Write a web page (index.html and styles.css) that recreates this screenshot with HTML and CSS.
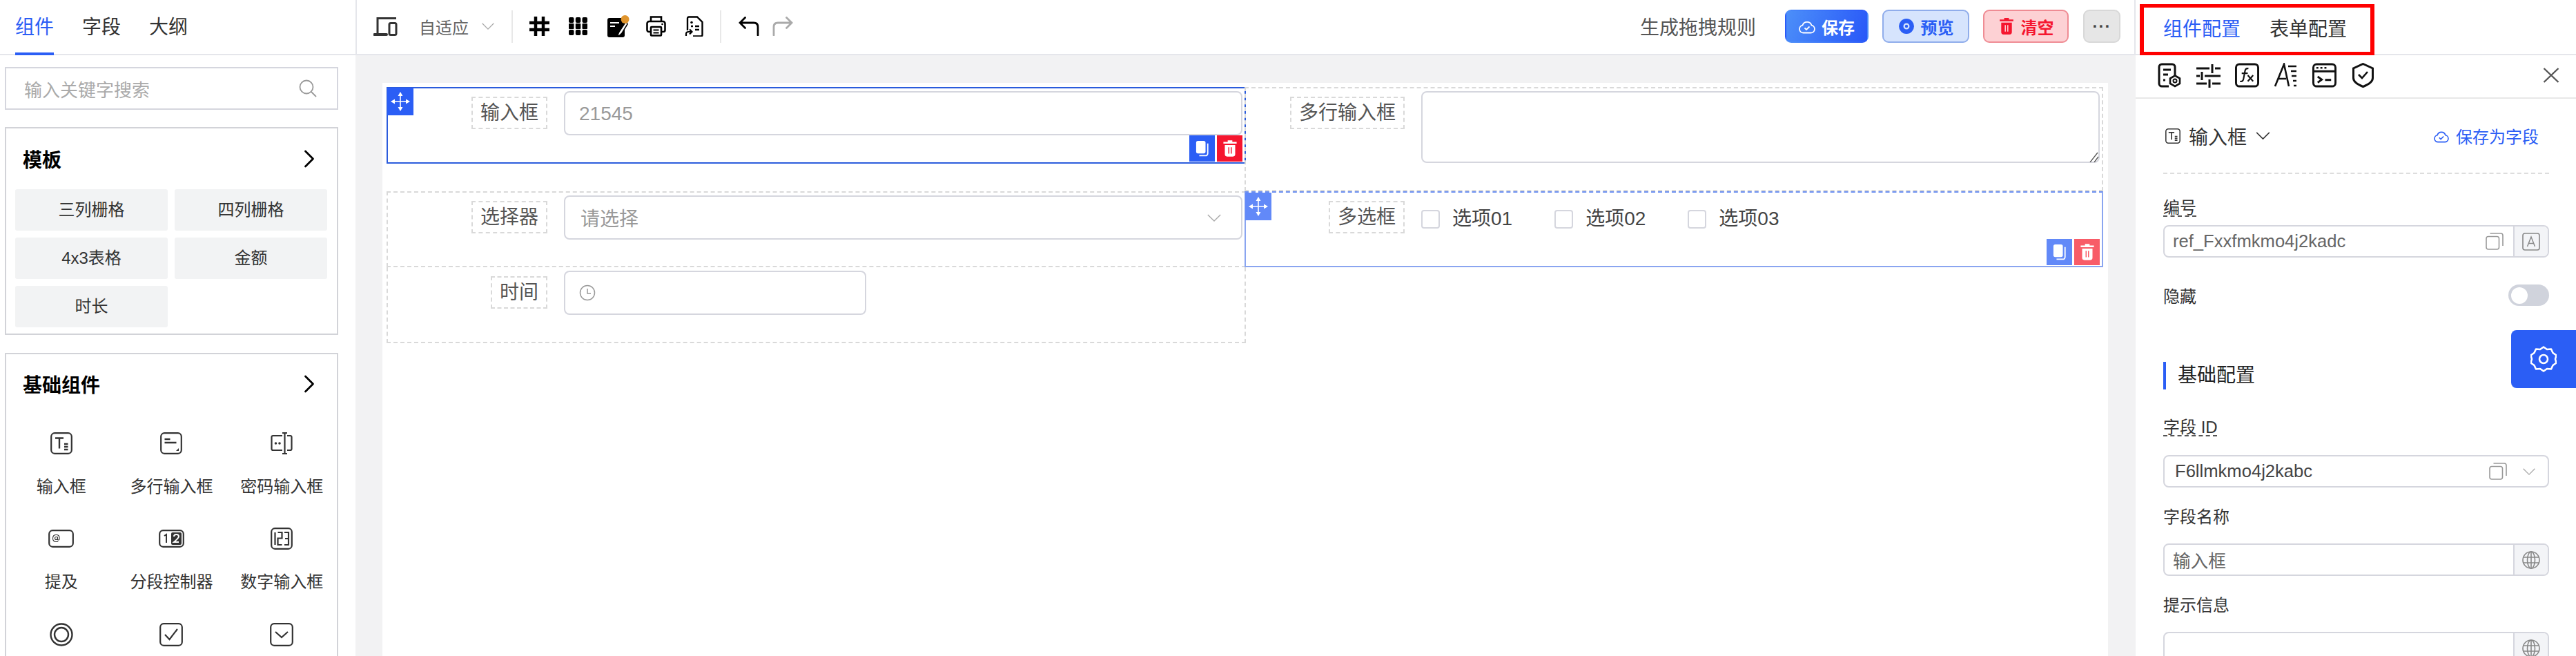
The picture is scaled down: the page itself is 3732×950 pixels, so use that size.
FILE: index.html
```html
<!DOCTYPE html>
<html lang="zh-CN">
<head>
    <meta charset="UTF-8">
    <title>表单设计器</title>
    <link rel="stylesheet" href="styles.css">
</head>
<body>
    <!-- 图标 -->
    <svg class="sprite" xmlns="http://www.w3.org/2000/svg">
        <symbol id="i-search" viewBox="0 0 26 26"><circle cx="11" cy="11" r="9.5" fill="none" stroke="currentColor" stroke-width="1.8"/><path d="M18 18l7 7" stroke="currentColor" stroke-width="1.8" fill="none"/></symbol>
        <symbol id="i-right" viewBox="0 0 16 26"><path d="M2.5 2l11 11-11 11" fill="none" stroke="currentColor" stroke-width="2.8" stroke-linecap="round" stroke-linejoin="round"/></symbol>
        <symbol id="i-down" viewBox="0 0 24 14"><path d="M2 2l10 10L22 2" fill="none" stroke="currentColor" stroke-width="1.6"/></symbol>
        <symbol id="i-input" viewBox="0 0 32 32"><rect x="1.2" y="1.2" width="29.6" height="29.6" rx="5" fill="none" stroke="currentColor" stroke-width="2.2"/><path d="M7 8.5h12M13 8.5v15M20 17h5.5M20 21h5.5M20 25h5.5" fill="none" stroke="currentColor" stroke-width="2.4"/></symbol>
        <symbol id="i-textarea" viewBox="0 0 32 32"><rect x="1.2" y="1.2" width="29.6" height="29.6" rx="5" fill="none" stroke="currentColor" stroke-width="2.2"/><path d="M6.500 10h8M6.500 15h17" fill="none" stroke="currentColor" stroke-width="2.4"/><path d="M27 23v4h-4z" fill="currentColor"/></symbol>
        <symbol id="i-password" viewBox="0 0 32 32"><path d="M17 5H3.500a2 2 0 00-2 2v17a2 2 0 002 2H17M24 5h4.500a2 2 0 012 2v17a2 2 0 01-2 2H24M20.500 1v30M17 1h7M17 31h7" fill="none" stroke="currentColor" stroke-width="2.2"/><circle cx="7.500" cy="16" r="1.800" fill="currentColor"/><circle cx="13" cy="16" r="1.800" fill="currentColor"/></symbol>
        <symbol id="i-mention" viewBox="0 0 37 26"><rect x="1.200" y="1.200" width="34.600" height="23.600" rx="5" fill="none" stroke="currentColor" stroke-width="2.200"/><circle cx="11.500" cy="12.500" r="2" fill="none" stroke="currentColor" stroke-width="1.100"/><path d="M13.500 10.500v3q0 1.800 1.400 1.500 1.300-.4 1.300-2.500 0-5-4.700-5-5 0-5 5t5 5q1.700 0 2.800-.6" fill="none" stroke="currentColor" stroke-width="1.100"/></symbol>
        <symbol id="i-segment" viewBox="0 0 37 26"><rect x="1.200" y="1.200" width="34.600" height="23.600" rx="5" fill="none" stroke="currentColor" stroke-width="2.200"/><path d="M8 9l3-2v12" fill="none" stroke="currentColor" stroke-width="2"/><rect x="18" y="4" width="15" height="18" rx="2" fill="currentColor"/><path d="M22 10q0-3 3.500-3t3.500 3q0 2-7 8h7" fill="none" stroke="#fff" stroke-width="2"/></symbol>
        <symbol id="i-number" viewBox="0 0 32 32"><rect x="1.200" y="1.200" width="29.600" height="29.600" rx="5" fill="none" stroke="currentColor" stroke-width="2.200"/><path d="M6.500 7v18M10.500 7h6v8.500h-6V25h6M20 7h6v9h-5M26 16v9h-6" fill="none" stroke="currentColor" stroke-width="2.200"/></symbol>
        <symbol id="i-radio" viewBox="0 0 34 34"><circle cx="17" cy="17" r="15.500" fill="none" stroke="currentColor" stroke-width="2.400"/><circle cx="17" cy="17" r="10" fill="none" stroke="currentColor" stroke-width="2.400"/></symbol>
        <symbol id="i-checkbox" viewBox="0 0 34 34"><rect x="1.200" y="1.200" width="31.600" height="31.600" rx="5" fill="none" stroke="currentColor" stroke-width="2.200"/><path d="M8 17l6.500 7L26 9" fill="none" stroke="currentColor" stroke-width="2.200"/></symbol>
        <symbol id="i-selectbox" viewBox="0 0 34 34"><rect x="1.200" y="1.200" width="31.600" height="31.600" rx="5" fill="none" stroke="currentColor" stroke-width="2.200"/><path d="M8 13l9 8 9-8" fill="none" stroke="currentColor" stroke-width="2.200"/></symbol>
        <symbol id="i-device" viewBox="0 0 35 28"><path d="M6 26V2.500h27" fill="none" stroke="currentColor" stroke-width="3"/><path d="M1.500 26H19" fill="none" stroke="currentColor" stroke-width="4" stroke-linecap="round"/><rect x="23" y="9.500" width="10" height="17" rx="2" fill="none" stroke="currentColor" stroke-width="3"/></symbol>
        <symbol id="i-hash" viewBox="0 0 29 28"><path d="M9 0v28M20 0v28M0 9h29M0 19h29" fill="none" stroke="currentColor" stroke-width="4.500"/></symbol>
        <symbol id="i-grid" viewBox="0 0 27 26"><rect x="0" y="0" width="7.500" height="8" rx="2" fill="currentColor"/><rect x="9.800" y="0" width="7.500" height="8" rx="2" fill="currentColor"/><rect x="19.500" y="0" width="7.500" height="8" rx="2" fill="currentColor"/><rect x="0" y="9" width="7.500" height="8" rx="1" fill="currentColor"/><rect x="9.800" y="9" width="7.500" height="8" rx="1" fill="currentColor"/><rect x="19.500" y="9" width="7.500" height="8" rx="1" fill="currentColor"/><rect x="0" y="18" width="7.500" height="8" rx="2" fill="currentColor"/><rect x="9.800" y="18" width="7.500" height="8" rx="2" fill="currentColor"/><rect x="19.500" y="18" width="7.500" height="8" rx="2" fill="currentColor"/></symbol>
        <symbol id="i-note" viewBox="0 0 32 32"><rect x="0" y="4" width="25" height="28" rx="3" fill="currentColor"/><path d="M4 11h13M4 16h7" stroke="#fff" stroke-width="2" fill="none"/><path d="M27 9L17 24l-3 7q5-2 7-5l8-13z" fill="#fff" stroke="currentColor" stroke-width="1.500"/><circle cx="25.500" cy="6" r="6" fill="#e0952d"/></symbol>
        <symbol id="i-print" viewBox="0 0 29 30"><path d="M7 8V1.500h15V8M7 23H4a2.500 2.500 0 01-2.500-2.500V11A3 3 0 014.500 8h20a3 3 0 013 3v9.500A2.500 2.500 0 0125 23h-3" fill="none" stroke="currentColor" stroke-width="2.600"/><rect x="7" y="16" width="15" height="12.500" rx="1" fill="none" stroke="currentColor" stroke-width="2.600"/><path d="M10.500 20.500h8M10.500 24.500h8" stroke="currentColor" stroke-width="1.800"/><circle cx="23.500" cy="12" r="1.300" fill="currentColor"/></symbol>
        <symbol id="i-doc" viewBox="0 0 27 30"><path d="M4 21V3.500a2 2 0 012-2h12l7.500 7.500v18.500a2 2 0 01-2 2H12" fill="none" stroke="currentColor" stroke-width="2.400"/><circle cx="10" cy="9.500" r="1.800" fill="currentColor"/><path d="M9 15h3M15 15h6M15 20h6" stroke="currentColor" stroke-width="2.400"/><path d="M2 29v-3q0-3 4-3h4M7 19.500l3.500 3.500L7 26.500" fill="none" stroke="currentColor" stroke-width="2.200"/></symbol>
        <symbol id="i-undo" viewBox="0 0 31 28"><path d="M29 27V15q0-6-6-6H3M10.500 1.500L3 9l7.500 7.500" fill="none" stroke="currentColor" stroke-width="2.800" stroke-linecap="round"/></symbol>
        <symbol id="i-redo" viewBox="0 0 31 28"><path d="M2 27V15q0-6 6-6h20M20.500 1.500L28 9l-7.500 7.500" fill="none" stroke="currentColor" stroke-width="2.800" stroke-linecap="round"/></symbol>
        <symbol id="i-cloud" viewBox="0 0 24 22"><path d="M6.500 20.500a5.500 5.500 0 01-1-10.900 6.800 6.800 0 0113 0 5.500 5.500 0 01-1 10.900z" fill="none" stroke="currentColor" stroke-width="1.800"/><path d="M8.500 13.500l2.500 2.500 4.500-4.500" fill="none" stroke="currentColor" stroke-width="1.800"/></symbol>
        <symbol id="i-eye" viewBox="0 0 24 24"><path fill-rule="evenodd" d="M12 1q5 0 8 3.500t3 7.500-3 7.500-8 3.500-8-3.500T1 12t3-7.500T12 1zm0 6.500a4.500 4.500 0 100 9 4.500 4.500 0 000-9z" fill="currentColor"/><circle cx="12" cy="12" r="2.200" fill="currentColor"/></symbol>
        <symbol id="i-trash" viewBox="0 0 24 28"><path fill-rule="evenodd" d="M8 0h8v2.500h7.500v3H.5v-3H8zM3 8h18v16a4 4 0 01-4 4H7a4 4 0 01-4-4zm6 4v11h1.800V12zm4.200 0v11H15V12z" fill="currentColor"/></symbol>
        <symbol id="i-move" viewBox="0 0 28 28"><path d="M14 1.500v25M1.500 14h25" stroke="currentColor" stroke-width="1.600" fill="none"/><path d="M14 0l3.500 6h-7zM14 28l3.500-6h-7zM0 14l6-3.500v7zM28 14l-6-3.500v7z" fill="currentColor"/></symbol>
        <symbol id="i-dup" viewBox="0 0 22 26"><rect x="1" y="1" width="15" height="20" rx="3" fill="currentColor"/><path d="M19.500 5v16a3.500 3.500 0 01-3.500 3.500H6" fill="none" stroke="currentColor" stroke-width="2"/></symbol>
        <symbol id="i-clock" viewBox="0 0 24 24"><circle cx="12" cy="12" r="10.500" fill="none" stroke="currentColor" stroke-width="1.500"/><path d="M12 6v7h5" fill="none" stroke="currentColor" stroke-width="1.500"/></symbol>
        <symbol id="i-grip" viewBox="0 0 14 15"><path d="M1 15L12 1M7 15l6-8" fill="none" stroke="currentColor" stroke-width="1.300"/></symbol>
        <symbol id="i-form-gear" viewBox="0 0 35 36"><path d="M16 34H6a4 4 0 01-4-4V6a4 4 0 014-4h15a4 4 0 014 4v12" fill="none" stroke="currentColor" stroke-width="3"/><path d="M8 10h11M8 17h7M8 25h3" stroke="currentColor" stroke-width="3"/><path d="M25 18.500l7 4v7.500l-7 4-7-4v-7.500z" fill="#fff" stroke="currentColor" stroke-width="2.600"/><circle cx="25" cy="26" r="2.500" fill="none" stroke="currentColor" stroke-width="2"/></symbol>
        <symbol id="i-sliders" viewBox="0 0 35 36"><path d="M0 8h19M27 8h8M0 19h5M12 19h23M0 30h15M23 30h12M23 2v13M8 13v12M19 24v12" fill="none" stroke="currentColor" stroke-width="3"/></symbol>
        <symbol id="i-fx" viewBox="0 0 36 36"><rect x="1.500" y="1.500" width="33" height="33" rx="5" fill="none" stroke="currentColor" stroke-width="3"/><path d="M20 8q-4-1-5 3l-2.500 13q-1 4-5 3M10 15h9M19 18l8 9M27 18l-8 9" fill="none" stroke="currentColor" stroke-width="2.200"/></symbol>
        <symbol id="i-font" viewBox="0 0 33 36"><path d="M1 34L14 2l7 32M6 23h11M20 5h12M24 12h8M25 19h7M27 26h5M28 33h4" fill="none" stroke="currentColor" stroke-width="2.600"/></symbol>
        <symbol id="i-console" viewBox="0 0 36 36"><rect x="1.500" y="1.500" width="33" height="33" rx="5" fill="none" stroke="currentColor" stroke-width="3"/><path d="M2 12h32M8 20l6 4.500L8 29M19 25h9" fill="none" stroke="currentColor" stroke-width="3"/><path d="M6 7h3M12 7h3M18 7h3" stroke="currentColor" stroke-width="2.600"/></symbol>
        <symbol id="i-shield" viewBox="0 0 31 36"><path d="M15.500 1.500L29.500 8v14q0 7-14 12.500Q1.500 29 1.500 22V8z" fill="none" stroke="currentColor" stroke-width="3"/><path d="M9 17l5 5 8-9" fill="none" stroke="currentColor" stroke-width="2.600"/></symbol>
        <symbol id="i-close" viewBox="0 0 24 22"><path d="M1.500 1l21 20M22.500 1l-21 20" fill="none" stroke="currentColor" stroke-width="2.400"/></symbol>
        <symbol id="i-copy" viewBox="0 0 26 25"><rect x="1" y="5.500" width="18.500" height="18.500" rx="3" fill="none" stroke="currentColor" stroke-width="1.600"/><path d="M6.500 1H22a3 3 0 013 3v15" fill="none" stroke="currentColor" stroke-width="1.600"/></symbol>
        <symbol id="i-letter" viewBox="0 0 26 26"><rect x="1" y="1" width="24" height="24" rx="3" fill="none" stroke="currentColor" stroke-width="1.600"/><path d="M7.500 20L13 6l5.500 14M9.500 15.500h7" fill="none" stroke="currentColor" stroke-width="1.500"/></symbol>
        <symbol id="i-globe" viewBox="0 0 26 26"><circle cx="13" cy="13" r="12" fill="none" stroke="currentColor" stroke-width="1.600"/><ellipse cx="13" cy="13" rx="5.500" ry="12" fill="none" stroke="currentColor" stroke-width="1.600"/><path d="M2 9h22M2 17h22M13 1v24" fill="none" stroke="currentColor" stroke-width="1.600"/></symbol>
        <symbol id="i-gear" viewBox="0 0 38 38"><path d="M19 1.500l5 3.500 6-.5 2.500 5.500 5 3.500-1.500 5.500 1.500 5.500-5 3.500L30 33.500l-6-.5-5 3.500-5-3.500-6 .5-2.500-5.500-5-3.500L2 19 .500 13.500l5-3.500L8 4.500l6 .5z" fill="none" stroke="currentColor" stroke-width="2.600" stroke-linejoin="round"/><circle cx="19" cy="19" r="6" fill="none" stroke="currentColor" stroke-width="2.600"/></symbol>
    </svg>

    <div class="app">
        <!-- 左侧组件栏 -->
        <aside class="sidebar">
            <div class="tabs">
                <span class="tab active">组件</span>
                <span class="tab">字段</span>
                <span class="tab">大纲</span>
            </div>
            <div class="side-body">
                <div class="search">
                    <span>输入关键字搜索</span>
                    <svg class="search-icon"><use href="#i-search"/></svg>
                </div>

                <div class="card">
                    <div class="card-head">
                        <span>模板</span>
                        <svg class="card-arrow"><use href="#i-right"/></svg>
                    </div>
                    <div class="tpl-grid">
                        <div class="tpl">三列栅格</div>
                        <div class="tpl">四列栅格</div>
                        <div class="tpl">4x3表格</div>
                        <div class="tpl">金额</div>
                        <div class="tpl">时长</div>
                    </div>
                </div>

                <div class="card card-fill">
                    <div class="card-head">
                        <span>基础组件</span>
                        <svg class="card-arrow"><use href="#i-right"/></svg>
                    </div>
                    <div class="comp-grid">
                        <div class="comp"><svg class="comp-icon"><use href="#i-input"/></svg><span>输入框</span></div>
                        <div class="comp"><svg class="comp-icon"><use href="#i-textarea"/></svg><span>多行输入框</span></div>
                        <div class="comp"><svg class="comp-icon"><use href="#i-password"/></svg><span>密码输入框</span></div>
                        <div class="comp"><svg class="comp-icon wide"><use href="#i-mention"/></svg><span>提及</span></div>
                        <div class="comp"><svg class="comp-icon wide"><use href="#i-segment"/></svg><span>分段控制器</span></div>
                        <div class="comp"><svg class="comp-icon"><use href="#i-number"/></svg><span>数字输入框</span></div>
                        <div class="comp"><svg class="comp-icon tall"><use href="#i-radio"/></svg></div>
                        <div class="comp"><svg class="comp-icon tall"><use href="#i-checkbox"/></svg></div>
                        <div class="comp"><svg class="comp-icon tall"><use href="#i-selectbox"/></svg></div>
                    </div>
                </div>
            </div>
        </aside>

        <!-- 中间画布 -->
        <main class="center">
            <div class="toolbar">
                <svg class="tb-device"><use href="#i-device"/></svg>
                <span class="tb-mode">自适应</span>
                <svg class="tb-chevron"><use href="#i-down"/></svg>
                <span class="tb-line"></span>
                <svg class="tb-icon hash"><use href="#i-hash"/></svg>
                <svg class="tb-icon grid"><use href="#i-grid"/></svg>
                <svg class="tb-icon note"><use href="#i-note"/></svg>
                <svg class="tb-icon print"><use href="#i-print"/></svg>
                <svg class="tb-icon doc"><use href="#i-doc"/></svg>
                <span class="tb-line"></span>
                <svg class="tb-icon undo"><use href="#i-undo"/></svg>
                <svg class="tb-icon redo"><use href="#i-redo"/></svg>

                <span class="tb-rule">生成拖拽规则</span>
                <button class="btn btn-save"><svg class="btn-icon"><use href="#i-cloud"/></svg>保存</button>
                <button class="btn btn-preview"><svg class="btn-icon"><use href="#i-eye"/></svg>预览</button>
                <button class="btn btn-clear"><svg class="btn-icon"><use href="#i-trash"/></svg>清空</button>
                <button class="btn btn-more">···</button>
            </div>

            <div class="canvas">
                <div class="board">
                    <div class="col">
                        <div class="item short selected">
                            <div class="handle"><svg><use href="#i-move"/></svg></div>
                            <div class="label-wrap"><span class="label">输入框</span></div>
                            <div class="control"><span class="ph num">21545</span></div>
                            <div class="actions">
                                <span class="act act-copy"><svg><use href="#i-dup"/></svg></span>
                                <span class="act act-del"><svg><use href="#i-trash"/></svg></span>
                            </div>
                        </div>
                        <div class="item">
                            <div class="label-wrap"><span class="label">选择器</span></div>
                            <div class="control select"><span class="ph">请选择</span><svg class="select-arrow"><use href="#i-down"/></svg></div>
                        </div>
                        <div class="item no-top">
                            <div class="label-wrap"><span class="label">时间</span></div>
                            <div class="control time"><svg class="clock"><use href="#i-clock"/></svg></div>
                        </div>
                    </div>

                    <div class="col col-right">
                        <div class="item tall-item">
                            <div class="label-wrap"><span class="label">多行输入框</span></div>
                            <div class="area-wrap">
                                <textarea class="area"></textarea>
                                <svg class="grip"><use href="#i-grip"/></svg>
                            </div>
                        </div>
                        <div class="item hovered">
                            <div class="handle"><svg><use href="#i-move"/></svg></div>
                            <div class="label-wrap"><span class="label">多选框</span></div>
                            <div class="checks">
                                <span class="check"><i></i>选项01</span>
                                <span class="check"><i></i>选项02</span>
                                <span class="check"><i></i>选项03</span>
                            </div>
                            <div class="actions">
                                <span class="act act-copy"><svg><use href="#i-dup"/></svg></span>
                                <span class="act act-del"><svg><use href="#i-trash"/></svg></span>
                            </div>
                        </div>
                    </div>
                </div>
            </div>
        </main>

        <!-- 右侧配置 -->
        <aside class="panel">
            <div class="panel-top">
                <div class="panel-tabs">
                    <span class="active">组件配置</span>
                    <span>表单配置</span>
                </div>
            </div>
            <div class="panel-tools">
                <svg class="pt i1"><use href="#i-form-gear"/></svg>
                <svg class="pt i2"><use href="#i-sliders"/></svg>
                <svg class="pt i3"><use href="#i-fx"/></svg>
                <svg class="pt i4"><use href="#i-font"/></svg>
                <svg class="pt i5"><use href="#i-console"/></svg>
                <svg class="pt i6"><use href="#i-shield"/></svg>
                <svg class="pt-close"><use href="#i-close"/></svg>
            </div>
            <div class="panel-body">
                <div class="comp-head">
                    <svg class="comp-head-icon"><use href="#i-input"/></svg>
                    <span class="comp-head-name">输入框</span>
                    <svg class="comp-head-arrow"><use href="#i-down"/></svg>
                    <span class="save-field"><svg><use href="#i-cloud"/></svg>保存为字段</span>
                </div>

                <div class="f-label first"><span class="dashed">编号</span></div>
                <div class="field">
                    <span class="field-text ref">ref_Fxxfmkmo4j2kadc</span>
                    <svg class="copy"><use href="#i-copy"/></svg>
                    <span class="addon"><svg><use href="#i-letter"/></svg></span>
                </div>

                <div class="switch-row">
                    <span>隐藏</span>
                    <span class="switch"><i></i></span>
                </div>

                <div class="section">基础配置</div>

                <div class="f-label id-label"><span class="dashed">字段 ID</span></div>
                <div class="field">
                    <span class="field-text dark">F6llmkmo4j2kabc</span>
                    <svg class="copy"><use href="#i-copy"/></svg>
                    <svg class="field-arrow"><use href="#i-down"/></svg>
                </div>

                <div class="f-label">字段名称</div>
                <div class="field">
                    <span class="field-text">输入框</span>
                    <span class="addon"><svg><use href="#i-globe"/></svg></span>
                </div>

                <div class="f-label">提示信息</div>
                <div class="field">
                    <span class="field-text"></span>
                    <span class="addon"><svg><use href="#i-globe"/></svg></span>
                </div>
            </div>
            <div class="gear-tab"><svg><use href="#i-gear"/></svg></div>
        </aside>
    </div>
</body>
</html>
```

FILE: styles.css
```css
* {
    box-sizing: border-box;
    margin: 0;
    padding: 0;
}

body {
    background: #fff;
    color: #333;
    font-family: "Liberation Sans", "Noto Sans CJK SC", sans-serif;
    overflow: hidden;
}

svg {
    display: block;
    flex: none;
}

.sprite {
    display: none;
}

.app {
    display: flex;
    width: 3732px;
    height: 950px;
    overflow: hidden;
}

/* 左侧 */
.sidebar {
    flex: none;
    width: 515px;
    height: 950px;
    overflow: hidden;
}

.tabs {
    display: flex;
    gap: 41px;
    height: 80px;
    padding-left: 22px;
    border-bottom: 2px solid #e5e6eb;
}

.tab {
    position: relative;
    height: 80px;
    font-size: 28px;
    line-height: 80px;
}

.tab.active {
    color: #2b5ef5;
}

.tab.active::after {
    content: "";
    position: absolute;
    left: 0;
    right: 0;
    bottom: 0;
    height: 4px;
    background: #2b5ef5;
}

.side-body {
    padding: 17px 25px 0 7px;
}

.search {
    display: flex;
    align-items: center;
    justify-content: space-between;
    height: 62px;
    padding: 0 29px 0 26px;
    border: 2px solid #d5d6de;
    color: #aaa;
    font-size: 26px;
}

.search-icon {
    width: 26px;
    height: 26px;
    color: #999;
}

.card {
    margin-top: 25px;
    padding-bottom: 9px;
    border: 2px solid #d2d3d8;
}

.card-fill {
    margin-top: 26px;
    height: 600px;
}

.card-head {
    display: flex;
    align-items: center;
    justify-content: space-between;
    height: 88px;
    padding: 0 32px 0 24px;
    color: #000;
    font-size: 28px;
    font-weight: 700;
}

.card-fill .card-head {
    height: 86px;
    margin-bottom: 2px;
}

.card-arrow {
    width: 16px;
    height: 26px;
}

.tpl-grid {
    display: grid;
    grid-template-columns: 221px 221px;
    gap: 10px;
    padding-left: 13px;
}

.tpl {
    height: 60px;
    background: #f2f3f4;
    border-radius: 3px;
    font-size: 24px;
    line-height: 60px;
    text-align: center;
}

.comp-grid {
    display: grid;
    grid-template-columns: repeat(3, 1fr);
}

.comp {
    display: flex;
    flex-direction: column;
    align-items: center;
    height: 138px;
    padding-top: 25px;
    font-size: 24px;
    line-height: 34px;
}

.comp-icon {
    width: 32px;
    height: 32px;
    margin-bottom: 30px;
}

.comp-icon.wide {
    width: 37px;
    height: 26px;
    margin: 3px 0 33px;
}

.comp-icon.tall {
    width: 34px;
    height: 34px;
}

/* 中间 */
.center {
    flex: none;
    width: 2579px;
    height: 950px;
    background: #f2f2f3;
}

.toolbar {
    display: flex;
    align-items: center;
    height: 80px;
    padding: 0 20px 2px 24px;
    background: #fff;
    border-left: 2px solid #e5e6eb;
    border-right: 2px solid #e5e6eb;
    border-bottom: 2px solid #e5e6eb;
}

.tb-device {
    width: 35px;
    height: 28px;
}

.tb-mode {
    margin-left: 31px;
    color: #666;
    font-size: 24px;
}

.tb-chevron {
    width: 20px;
    height: 12px;
    margin-left: 18px;
    color: #aaa;
}

.tb-line {
    width: 2px;
    height: 47px;
    margin: 0 24px;
    background: #e8e8e8;
}

.tb-icon {
    color: #000;
}

.hash { width: 29px; height: 28px; }
.grid { width: 27px; height: 26px; margin-left: 28px; }
.note { width: 32px; height: 32px; margin-left: 29px; }
.print { width: 29px; height: 30px; margin-left: 24px; }
.doc { width: 27px; height: 30px; margin-left: 27px; }
.undo { width: 31px; height: 28px; }
.redo { width: 31px; height: 28px; margin-left: 19px; color: #aaa; }

.tb-rule {
    margin-left: auto;
    margin-right: 42px;
    color: #555;
    font-size: 28px;
}

.btn {
    display: flex;
    align-items: center;
    justify-content: center;
    gap: 9px;
    height: 48px;
    margin-right: 20px;
    border: 2px solid transparent;
    border-radius: 9px;
    font-family: inherit;
    font-size: 24px;
    font-weight: 700;
}

.btn-icon {
    width: 24px;
    height: 24px;
}

.btn-save {
    width: 121px;
    color: #fff;
    background: linear-gradient(110deg, #4c8ff9, #2857f8);
}

.btn-preview {
    width: 126px;
    color: #2b5ef5;
    background: #d6e4fd;
    border-color: #90adeb;
}

.btn-clear {
    width: 124px;
    color: #f5162f;
    background: #fdd1d4;
    border-color: #ef8c94;
}

.btn-more {
    width: 54px;
    margin-right: 0;
    margin-left: 1px;
    color: #444;
    background: #e6e6e6;
    border-color: #d8d8d8;
    letter-spacing: 1px;
}

.canvas {
    padding: 40px 0 0 39px;
}

.board {
    display: flex;
    width: 2500px;
    height: 830px;
    padding: 6px 0 0 6px;
    background: #fff;
}

.col {
    flex: none;
    width: 1245px;
}

.col-right {
    width: 1244px;
    margin-left: -2px;
}

.item {
    position: relative;
    display: flex;
    align-items: flex-start;
    height: 110px;
    padding: 4px 3px 0 0;
    border: 2px dashed #d9d9d9;
}

.item.short {
    height: 111px;
    margin-bottom: 40px;
}

.item.no-top {
    border-top: 0;
    padding-top: 5px;
}

.item.tall-item {
    height: 151px;
}

.item.selected {
    border: 2px solid #2b5cdc;
}

.item.hovered {
    border: 2px solid #8aa5f0;
    border-top: 2px dashed #6c8ff0;
}

.label-wrap {
    display: flex;
    justify-content: flex-end;
    flex: none;
    width: 231px;
    margin: 8px 24px 0 0;
}

.col-right .label-wrap {
    width: 230px;
}

.label {
    height: 47px;
    padding: 0 11px;
    border: 2px dashed #d9d9d9;
    color: #555;
    font-size: 28px;
    line-height: 43px;
}

.control {
    display: flex;
    align-items: center;
    flex: 1;
    height: 64px;
    padding: 0 20px;
    border: 2px solid #d5d6de;
    border-radius: 8px;
    font-size: 28px;
}

.ph {
    color: #999;
}

.ph.num {
    padding-top: 2px;
}

.select {
    justify-content: space-between;
    padding-left: 22px;
    padding-right: 28px;
}

.select-arrow {
    width: 22px;
    height: 13px;
    color: #aaa;
}

.time {
    flex: none;
    width: 438px;
}

.clock {
    width: 24px;
    height: 24px;
    color: #999;
}

.area-wrap {
    position: relative;
    flex: 1;
    height: 104px;
}

.area {
    display: block;
    width: 100%;
    height: 100%;
    border: 2px solid #d5d6de;
    border-radius: 8px;
    outline: 0;
    resize: none;
}

.grip {
    position: absolute;
    right: 1px;
    bottom: 1px;
    width: 14px;
    height: 15px;
    color: #555;
}

.checks {
    display: flex;
    gap: 61px;
    margin-top: 18px;
    color: #444;
    font-size: 28px;
}

.check {
    display: flex;
    align-items: center;
    gap: 18px;
    line-height: 32px;
}

.check i {
    width: 27px;
    height: 27px;
    border: 2px solid #d5d6de;
    border-radius: 4px;
}

.handle {
    position: absolute;
    left: -1px;
    top: -1px;
    display: flex;
    align-items: center;
    justify-content: center;
    width: 38px;
    height: 40px;
    background: #2b5ef5;
    color: #fff;
}

.hovered .handle {
    top: 0;
    left: -1px;
    background: #6289f8;
}

.handle svg {
    width: 28px;
    height: 28px;
}

.actions {
    position: absolute;
    right: 3px;
    bottom: 1px;
    display: flex;
    gap: 3px;
}

.act {
    display: flex;
    align-items: center;
    justify-content: center;
    width: 37px;
    height: 38px;
    color: #fff;
}

.act svg {
    width: 20px;
    height: 26px;
}

.act-copy {
    background: #2b5ef5;
}

.act-del {
    background: #f5162f;
}

.hovered .act-copy {
    background: #6289f8;
}

.hovered .act-del {
    background: #f85c68;
}

/* 右侧 */
.panel {
    position: relative;
    flex: none;
    width: 638px;
    height: 950px;
    overflow: hidden;
}

.panel-top {
    height: 80px;
    padding: 6px 0 0 6px;
    border-bottom: 2px solid #e5e6eb;
}

.panel-tabs {
    display: flex;
    gap: 42px;
    width: 340px;
    height: 74px;
    padding: 16px 0 0 28px;
    border: 5px solid #f00;
    border-width: 5px 6px;
    font-size: 28px;
    line-height: 32px;
}

.panel-tabs .active {
    color: #2b5ef5;
}

.panel-tools {
    display: flex;
    align-items: center;
    gap: 21px;
    height: 63px;
    padding: 0 24px 3px 32px;
    border-bottom: 2px solid #e8e8e8;
    color: #111;
}

.pt {
    width: 35px;
    height: 36px;
}

.pt-close {
    width: 24px;
    height: 22px;
    margin-left: auto;
    color: #555;
}

.panel-body {
    padding: 0 39px 0 40px;
}

.comp-head {
    display: flex;
    align-items: center;
    height: 109px;
    padding-left: 3px;
    border-bottom: 2px dashed #ddd;
}

.comp-head-icon {
    width: 22px;
    height: 22px;
    color: #333;
}

.comp-head-name {
    margin-left: 12px;
    font-size: 28px;
}

.comp-head-arrow {
    width: 23px;
    height: 13px;
    margin-left: 12px;
}

.save-field {
    display: flex;
    align-items: center;
    gap: 10px;
    margin-left: auto;
    margin-right: 15px;
    color: #2b5ef5;
    font-size: 24px;
}

.save-field svg {
    width: 22px;
    height: 20px;
}

.f-label {
    margin-top: 26px;
    margin-bottom: 21px;
    font-size: 24px;
    line-height: 34px;
}

.f-label.first {
    margin-top: 32px;
    margin-bottom: 8px;
}

.f-label.id-label {
    margin-top: 38px;
    margin-bottom: 23px;
}

.dashed {
    text-decoration: underline dashed 2px #555;
    text-underline-offset: 3px;
}

.field {
    display: flex;
    align-items: center;
    height: 47px;
    border: 2px solid #d5d6de;
    border-radius: 8px;
    font-size: 25.6px;
}

.field-text {
    flex: 1;
    padding-left: 12px;
    color: #666;
}

.field-text.dark {
    padding-left: 15px;
    color: #444;
}

.copy {
    width: 26px;
    height: 25px;
    margin-right: 14px;
    color: #999;
}

.addon {
    display: flex;
    align-items: center;
    justify-content: center;
    flex: none;
    width: 50px;
    height: 100%;
    background: #f3f4f7;
    border-left: 2px solid #d5d6de;
    border-radius: 0 6px 6px 0;
    color: #888;
}

.addon svg {
    width: 26px;
    height: 26px;
}

.field-arrow {
    width: 20px;
    height: 12px;
    margin: 0 17px 0 8px;
    color: #aaa;
}

.switch-row {
    display: flex;
    align-items: center;
    justify-content: space-between;
    height: 31px;
    margin-top: 39px;
    font-size: 24px;
}

.switch {
    width: 59px;
    height: 31px;
    padding: 4px;
    background: #d0d3dc;
    border-radius: 16px;
}

.switch i {
    display: block;
    width: 24px;
    height: 24px;
    background: #fff;
    border-radius: 50%;
}

.section {
    height: 40px;
    margin-top: 81px;
    padding-left: 17px;
    border-left: 4px solid #2b5ef5;
    color: #222;
    font-size: 28px;
    line-height: 40px;
}

.gear-tab {
    position: absolute;
    top: 478px;
    right: 0;
    display: flex;
    align-items: center;
    justify-content: center;
    width: 94px;
    height: 84px;
    background: #2b5ef5;
    border-radius: 8px 0 0 8px;
    color: #fff;
}

.gear-tab svg {
    width: 38px;
    height: 38px;
}
```
